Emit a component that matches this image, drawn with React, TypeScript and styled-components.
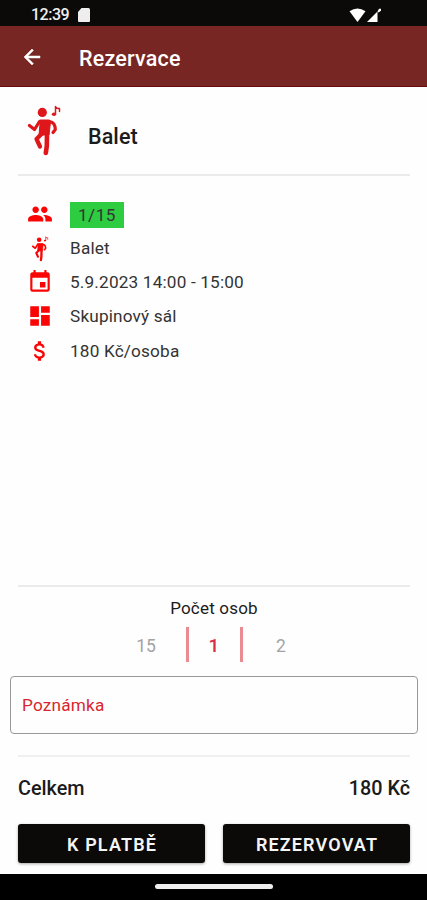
import React from "react";
import styled, { createGlobalStyle } from "styled-components";
import { MdArrowBack, MdAttachMoney, MdDashboard, MdEvent, MdPeople } from "react-icons/md";

const GlobalStyle = createGlobalStyle`
  *, *::before, *::after { box-sizing: border-box; }
  body { margin: 0; background: #fff; font-family: Roboto, sans-serif; }
`;

const Screen = styled.div`
  display: flex;
  flex-direction: column;
  width: 427px;
  height: 900px;
  overflow: hidden;
  background: #fefefe;
  color: #1b1b1b;
`;

const StatusBar = styled.header`
  display: flex;
  align-items: center;
  height: 26px;
  padding: 4px 45px 0 31px;
  background: #0b0a08;
  color: #eee;
`;

const Clock = styled.span`
  width: 46px;
  font-size: 16px;
  font-weight: 500;
  line-height: 20px;
  letter-spacing: -0.5px;
`;

const Signals = styled.div`
  display: flex;
  margin-left: auto;
`;

const AppBar = styled.div`
  display: flex;
  align-items: center;
  height: 61px;
  padding: 2px 20px 0;
  background: #782624;
  border-bottom: 1px solid #650b0b;
  color: #fff;
`;

const BackButton = styled.button`
  display: flex;
  width: 59px;
  padding: 0 0 1px;
  border: 0;
  background: none;
  color: inherit;
  font-size: 24px;

  path:last-child {
    stroke: currentColor;
    stroke-width: 0.5px;
  }
`;

const PageTitle = styled.h1`
  margin: 3px 0 0;
  font-size: 21.5px;
  font-weight: 500;
  line-height: 28px;
  letter-spacing: 0.2px;
`;

const Activity = styled.section`
  display: flex;
  height: 89px;
  margin: 0 17px 0 18px;
  padding: 16px 0 0 8px;
  border-bottom: 2px solid #ebebeb;
`;

const ActivityName = styled.h2`
  margin: 20px 0 0 26px;
  font-size: 21.5px;
  font-weight: 500;
  line-height: 28px;
  letter-spacing: 0.1px;
`;

const Details = styled.ul`
  display: grid;
  grid-template-rows: 34px 34px 33px 36px 33px;
  margin: 22px 0 0 28px;
  padding: 0;
  list-style: none;
`;

const DetailRow = styled.li`
  display: grid;
  grid-template-columns: 24px 1fr;
  column-gap: 18px;
  align-items: center;
  font-size: 17.2px;
  line-height: 26px;
  letter-spacing: 0.17px;
  color: #333;
`;

const DetailIcon = styled.span`
  display: flex;
  justify-content: center;
  padding-bottom: 2px;
  font-size: 26px;
  color: #f90505;

  svg {
    flex: none;
  }
`;

const DetailText = styled.span`
  padding-bottom: 2px;
  line-height: 24px;
`;

const Capacity = styled.span`
  justify-self: start;
  width: 54px;
  height: 26px;
  text-align: center;
  letter-spacing: 0.5px;
  background: #2ecc40;
`;

const People = styled.section`
  margin: auto 17px 0 18px;
  height: 91px;
  border-top: 2px solid #ebebeb;
`;

const PeopleLabel = styled.div`
  margin-top: 9px;
  font-size: 17px;
  line-height: 24px;
  letter-spacing: 0.2px;
  text-align: center;
`;

const Picker = styled.div`
  display: grid;
  grid-template-columns: 79px 57px 77px;
  justify-content: center;
  height: 35px;
  margin: 7px 1px 0 0;
`;

const Count = styled.span<{ $active?: boolean }>`
  display: flex;
  align-items: center;
  justify-content: center;
  padding: 2px 1px 0 0;
  border: solid #ea8a91;
  border-width: ${({ $active }) => ($active ? "0 3px" : "0")};
  font-size: ${({ $active }) => ($active ? "19px" : "17.5px")};
  font-weight: ${({ $active }) => ($active ? 500 : 400)};
  color: ${({ $active }) => ($active ? "#d82c43" : "#a3a3a3")};
`;

const NoteField = styled.div`
  display: flex;
  align-items: center;
  height: 58px;
  margin: 0 9px 0 10px;
  padding: 0 11px;
  border: 1px solid #989898;
  border-radius: 4px;
  font-size: 17.2px;
  letter-spacing: 0.2px;
  color: #d9272e;
`;

const Total = styled.section`
  display: flex;
  justify-content: space-between;
  height: 69px;
  margin: 21px 17px 0 18px;
  padding-top: 18px;
  border-top: 2px solid #f0f0f0;
  font-size: 19.8px;
  font-weight: 500;
  line-height: 28px;
`;

const Actions = styled.div`
  display: grid;
  grid-template-columns: 1fr 1fr;
  gap: 18px;
  height: 50px;
  margin: 0 17px 0 18px;
`;

const ActionButton = styled.button`
  height: 39px;
  padding: 2px 0 0 1px;
  border: 0;
  border-radius: 3px;
  background: #0b0a08;
  box-shadow: 0 1px 3px rgba(0, 0, 0, 0.35);
  color: #f5f5f5;
  font: 600 18px Roboto, sans-serif;
  letter-spacing: 1.15px;
`;

const NavigationBar = styled.footer`
  display: flex;
  justify-content: center;
  height: 26px;
  padding-top: 10px;
  background: #000;
`;

const HomeHandle = styled.span`
  width: 118px;
  height: 5px;
  border-radius: 3px;
  background: #eee;
`;

function Dancer({ width, height }: { width: number; height: number }) {
  return (
    <svg width={width} height={height} viewBox="0 0 36 54" fill="none" stroke="currentColor" strokeLinecap="round" strokeLinejoin="round">
      <circle cx="16.3" cy="9.4" r="4.6" fill="currentColor" stroke="none" />
      <path d="M14 17h9.5l1 2-1.5 13H13l1-11z" fill="currentColor" strokeWidth="1" />
      <path d="M3.4 22.5 8.5 26.5 13.5 18.5H23.5Q29.3 19.5 29.3 26.5L27 29.5" strokeWidth="3.2" />
      <path d="M15.5 31 10.5 36 14 43.5" strokeWidth="4.2" />
      <path d="M21 30 20.8 43 19.8 50" strokeWidth="4.6" />
      <path d="M29.5 10.5V3.5Q30.5 6 33.5 5.5V8.5" strokeWidth="1.5" />
      <ellipse cx="28" cy="11.2" rx="2.2" ry="1.8" fill="currentColor" stroke="none" />
    </svg>
  );
}

const LargeIcon = styled.div`
  display: flex;
  width: 36px;
  height: 54px;
  color: #df171a;
`;

const details = [
  { icon: <MdPeople />, text: "1/15", badge: true },
  { icon: <Dancer width={18} height={27} />, text: "Balet" },
  { icon: <MdEvent />, text: "5.9.2023 14:00 - 15:00" },
  { icon: <MdDashboard />, text: "Skupinový sál" },
  { icon: <MdAttachMoney />, text: "180 Kč/osoba" },
];

export default function App() {
  return (
    <Screen>
      <GlobalStyle />
      <StatusBar>
        <Clock>12:39</Clock>
        <svg width="13" height="15" viewBox="0 0 13 15">
          <path d="M4.5 0H11.5Q13 0 13 1.5V13Q13 14 12 14H2Q1 14 1 13V4z" fill="#eee" />
        </svg>
        <Signals>
          <svg width="34" height="15" viewBox="0 0 34 15" fill="#fff">
            <path d="M1.5 3.2Q9.5-2.2 17.5 3.2L9.5 14z" />
            <path d="M19 14 29.5 3.5V14z" />
            <path d="M29.5 3.5 31 .8H33V2.8L30.5 4.5z" />
          </svg>
        </Signals>
      </StatusBar>
      <AppBar>
        <BackButton aria-label="Zpět"><MdArrowBack /></BackButton>
        <PageTitle>Rezervace</PageTitle>
      </AppBar>
      <Activity>
        <LargeIcon><Dancer width={36} height={54} /></LargeIcon>
        <ActivityName>Balet</ActivityName>
      </Activity>
      <Details>
        {details.map(({ icon, text, badge }, index) => (
          <DetailRow key={index}>
            <DetailIcon>{icon}</DetailIcon>
            {badge ? <Capacity>{text}</Capacity> : <DetailText>{text}</DetailText>}
          </DetailRow>
        ))}
      </Details>
      <People>
        <PeopleLabel>Počet osob</PeopleLabel>
        <Picker>
          <Count>15</Count>
          <Count $active>1</Count>
          <Count>2</Count>
        </Picker>
      </People>
      <NoteField>Poznámka</NoteField>
      <Total>
        <span>Celkem</span>
        <span>180 Kč</span>
      </Total>
      <Actions>
        <ActionButton>K PLATBĚ</ActionButton>
        <ActionButton>REZERVOVAT</ActionButton>
      </Actions>
      <NavigationBar><HomeHandle /></NavigationBar>
    </Screen>
  );
}
